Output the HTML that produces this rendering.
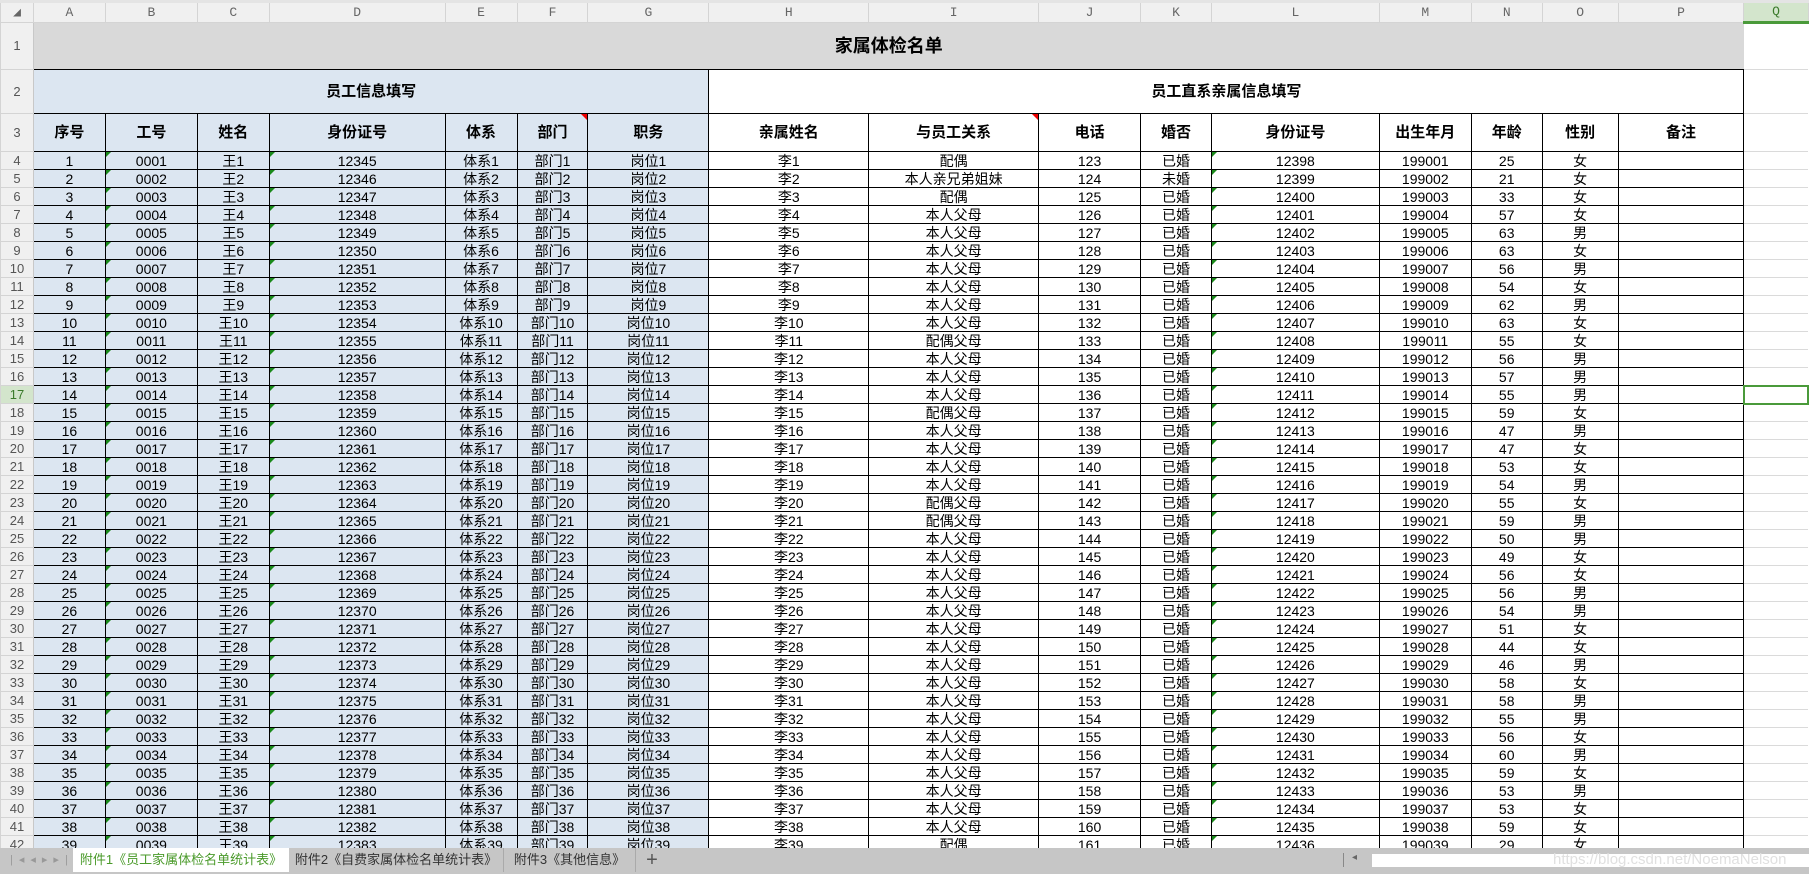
<!DOCTYPE html>
<html><head><meta charset="utf-8"><style>
*{box-sizing:border-box;margin:0;padding:0}
body{width:1809px;height:874px;overflow:hidden;background:#fff;font-family:"Liberation Sans","Noto Sans CJK SC",sans-serif;position:relative}
table{border-collapse:collapse;table-layout:fixed;position:absolute;left:0;top:0}
td{text-align:center;font-size:14px;color:#000;border:1px solid #000;overflow:hidden;white-space:nowrap;position:relative;padding:0;line-height:16px}
tr.d td{height:18px}
tr.hd td{height:21px;background:#f0f0f0;border:1px solid #d4d4d4;border-top:3px solid #e4e4e4;color:#666;font-size:13px;font-family:"Liberation Mono",monospace}
td.rn{background:#f0f0f0;border:1px solid #d4d4d4;color:#555;font-size:13px;border-right:1px solid #c8c8c8}
td.q{border:none;border-bottom:1px solid #dadada;border-left:1px solid #000}
td.b{background:#dce6f1}
tr.h3 td{font-weight:bold;font-size:15px}
td.g::before{content:"";position:absolute;left:0;top:0;border-top:5px solid #1a8a1a;border-right:5px solid transparent}
td.r::after{content:"";position:absolute;right:0;top:0;border-top:6px solid #e00;border-left:6px solid transparent}
td.sel{background:#d3e5cc;color:#3a7a2a}
.tabs{position:absolute;left:0;top:848px;width:1809px;height:26px;background:#c6c6c6;font-size:13px;color:#333}
.tab{position:absolute;top:0;height:24px;line-height:24px;text-align:center}
</style></head><body>
<table>
<colgroup><col style="width:33px"><col style="width:72px"><col style="width:92px"><col style="width:72px"><col style="width:176px"><col style="width:72px"><col style="width:71px"><col style="width:121px"><col style="width:160px"><col style="width:170px"><col style="width:102px"><col style="width:71px"><col style="width:168px"><col style="width:92px"><col style="width:71px"><col style="width:76px"><col style="width:126px"><col style="width:64px"></colgroup>
<tr class="hd"><td>◢</td><td>A</td><td>B</td><td>C</td><td>D</td><td>E</td><td>F</td><td>G</td><td>H</td><td>I</td><td>J</td><td>K</td><td>L</td><td>M</td><td>N</td><td>O</td><td>P</td><td style="background:#d3e5cc;border-bottom:3px solid #4a9a3a;color:#3a7a2a">Q</td></tr>
<tr><td class="rn" style="height:47px">1</td><td colspan="16" style="background:#d9d9d9;font-weight:bold;font-size:18px;border-top:none;border-left:none;border-right:1px solid #d9d9d9">家属体检名单</td><td class="q" style="border-left:none"></td></tr>
<tr><td class="rn" style="height:44px">2</td><td colspan="7" class="b" style="font-weight:bold;font-size:15px">员工信息填写</td><td colspan="9" style="font-weight:bold;font-size:15px">员工直系亲属信息填写</td><td class="q"></td></tr>
<tr class="h3"><td class="rn" style="height:38px;font-weight:normal;font-size:13px">3</td><td class="b">序号</td><td class="b">工号</td><td class="b">姓名</td><td class="b">身份证号</td><td class="b">体系</td><td class="b r">部门</td><td class="b">职务</td><td>亲属姓名</td><td class="r">与员工关系</td><td>电话</td><td>婚否</td><td>身份证号</td><td>出生年月</td><td>年龄</td><td>性别</td><td>备注</td><td class="q"></td></tr>
<tr class="d"><td class="rn">4</td><td class="b">1</td><td class="b g">0001</td><td class="b">王1</td><td class="b g">12345</td><td class="b">体系1</td><td class="b">部门1</td><td class="b">岗位1</td><td>李1</td><td>配偶</td><td>123</td><td>已婚</td><td class="g">12398</td><td>199001</td><td>25</td><td>女</td><td></td><td class="q"></td></tr>
<tr class="d"><td class="rn">5</td><td class="b">2</td><td class="b g">0002</td><td class="b">王2</td><td class="b g">12346</td><td class="b">体系2</td><td class="b">部门2</td><td class="b">岗位2</td><td>李2</td><td>本人亲兄弟姐妹</td><td>124</td><td>未婚</td><td class="g">12399</td><td>199002</td><td>21</td><td>女</td><td></td><td class="q"></td></tr>
<tr class="d"><td class="rn">6</td><td class="b">3</td><td class="b g">0003</td><td class="b">王3</td><td class="b g">12347</td><td class="b">体系3</td><td class="b">部门3</td><td class="b">岗位3</td><td>李3</td><td>配偶</td><td>125</td><td>已婚</td><td class="g">12400</td><td>199003</td><td>33</td><td>女</td><td></td><td class="q"></td></tr>
<tr class="d"><td class="rn">7</td><td class="b">4</td><td class="b g">0004</td><td class="b">王4</td><td class="b g">12348</td><td class="b">体系4</td><td class="b">部门4</td><td class="b">岗位4</td><td>李4</td><td>本人父母</td><td>126</td><td>已婚</td><td class="g">12401</td><td>199004</td><td>57</td><td>女</td><td></td><td class="q"></td></tr>
<tr class="d"><td class="rn">8</td><td class="b">5</td><td class="b g">0005</td><td class="b">王5</td><td class="b g">12349</td><td class="b">体系5</td><td class="b">部门5</td><td class="b">岗位5</td><td>李5</td><td>本人父母</td><td>127</td><td>已婚</td><td class="g">12402</td><td>199005</td><td>63</td><td>男</td><td></td><td class="q"></td></tr>
<tr class="d"><td class="rn">9</td><td class="b">6</td><td class="b g">0006</td><td class="b">王6</td><td class="b g">12350</td><td class="b">体系6</td><td class="b">部门6</td><td class="b">岗位6</td><td>李6</td><td>本人父母</td><td>128</td><td>已婚</td><td class="g">12403</td><td>199006</td><td>63</td><td>女</td><td></td><td class="q"></td></tr>
<tr class="d"><td class="rn">10</td><td class="b">7</td><td class="b g">0007</td><td class="b">王7</td><td class="b g">12351</td><td class="b">体系7</td><td class="b">部门7</td><td class="b">岗位7</td><td>李7</td><td>本人父母</td><td>129</td><td>已婚</td><td class="g">12404</td><td>199007</td><td>56</td><td>男</td><td></td><td class="q"></td></tr>
<tr class="d"><td class="rn">11</td><td class="b">8</td><td class="b g">0008</td><td class="b">王8</td><td class="b g">12352</td><td class="b">体系8</td><td class="b">部门8</td><td class="b">岗位8</td><td>李8</td><td>本人父母</td><td>130</td><td>已婚</td><td class="g">12405</td><td>199008</td><td>54</td><td>女</td><td></td><td class="q"></td></tr>
<tr class="d"><td class="rn">12</td><td class="b">9</td><td class="b g">0009</td><td class="b">王9</td><td class="b g">12353</td><td class="b">体系9</td><td class="b">部门9</td><td class="b">岗位9</td><td>李9</td><td>本人父母</td><td>131</td><td>已婚</td><td class="g">12406</td><td>199009</td><td>62</td><td>男</td><td></td><td class="q"></td></tr>
<tr class="d"><td class="rn">13</td><td class="b">10</td><td class="b g">0010</td><td class="b">王10</td><td class="b g">12354</td><td class="b">体系10</td><td class="b">部门10</td><td class="b">岗位10</td><td>李10</td><td>本人父母</td><td>132</td><td>已婚</td><td class="g">12407</td><td>199010</td><td>63</td><td>女</td><td></td><td class="q"></td></tr>
<tr class="d"><td class="rn">14</td><td class="b">11</td><td class="b g">0011</td><td class="b">王11</td><td class="b g">12355</td><td class="b">体系11</td><td class="b">部门11</td><td class="b">岗位11</td><td>李11</td><td>配偶父母</td><td>133</td><td>已婚</td><td class="g">12408</td><td>199011</td><td>55</td><td>女</td><td></td><td class="q"></td></tr>
<tr class="d"><td class="rn">15</td><td class="b">12</td><td class="b g">0012</td><td class="b">王12</td><td class="b g">12356</td><td class="b">体系12</td><td class="b">部门12</td><td class="b">岗位12</td><td>李12</td><td>本人父母</td><td>134</td><td>已婚</td><td class="g">12409</td><td>199012</td><td>56</td><td>男</td><td></td><td class="q"></td></tr>
<tr class="d"><td class="rn">16</td><td class="b">13</td><td class="b g">0013</td><td class="b">王13</td><td class="b g">12357</td><td class="b">体系13</td><td class="b">部门13</td><td class="b">岗位13</td><td>李13</td><td>本人父母</td><td>135</td><td>已婚</td><td class="g">12410</td><td>199013</td><td>57</td><td>男</td><td></td><td class="q"></td></tr>
<tr class="d"><td class="rn sel">17</td><td class="b">14</td><td class="b g">0014</td><td class="b">王14</td><td class="b g">12358</td><td class="b">体系14</td><td class="b">部门14</td><td class="b">岗位14</td><td>李14</td><td>本人父母</td><td>136</td><td>已婚</td><td class="g">12411</td><td>199014</td><td>55</td><td>男</td><td></td><td class="q" style="border:2px solid #4a9a3a"></td></tr>
<tr class="d"><td class="rn">18</td><td class="b">15</td><td class="b g">0015</td><td class="b">王15</td><td class="b g">12359</td><td class="b">体系15</td><td class="b">部门15</td><td class="b">岗位15</td><td>李15</td><td>配偶父母</td><td>137</td><td>已婚</td><td class="g">12412</td><td>199015</td><td>59</td><td>女</td><td></td><td class="q"></td></tr>
<tr class="d"><td class="rn">19</td><td class="b">16</td><td class="b g">0016</td><td class="b">王16</td><td class="b g">12360</td><td class="b">体系16</td><td class="b">部门16</td><td class="b">岗位16</td><td>李16</td><td>本人父母</td><td>138</td><td>已婚</td><td class="g">12413</td><td>199016</td><td>47</td><td>男</td><td></td><td class="q"></td></tr>
<tr class="d"><td class="rn">20</td><td class="b">17</td><td class="b g">0017</td><td class="b">王17</td><td class="b g">12361</td><td class="b">体系17</td><td class="b">部门17</td><td class="b">岗位17</td><td>李17</td><td>本人父母</td><td>139</td><td>已婚</td><td class="g">12414</td><td>199017</td><td>47</td><td>女</td><td></td><td class="q"></td></tr>
<tr class="d"><td class="rn">21</td><td class="b">18</td><td class="b g">0018</td><td class="b">王18</td><td class="b g">12362</td><td class="b">体系18</td><td class="b">部门18</td><td class="b">岗位18</td><td>李18</td><td>本人父母</td><td>140</td><td>已婚</td><td class="g">12415</td><td>199018</td><td>53</td><td>女</td><td></td><td class="q"></td></tr>
<tr class="d"><td class="rn">22</td><td class="b">19</td><td class="b g">0019</td><td class="b">王19</td><td class="b g">12363</td><td class="b">体系19</td><td class="b">部门19</td><td class="b">岗位19</td><td>李19</td><td>本人父母</td><td>141</td><td>已婚</td><td class="g">12416</td><td>199019</td><td>54</td><td>男</td><td></td><td class="q"></td></tr>
<tr class="d"><td class="rn">23</td><td class="b">20</td><td class="b g">0020</td><td class="b">王20</td><td class="b g">12364</td><td class="b">体系20</td><td class="b">部门20</td><td class="b">岗位20</td><td>李20</td><td>配偶父母</td><td>142</td><td>已婚</td><td class="g">12417</td><td>199020</td><td>55</td><td>女</td><td></td><td class="q"></td></tr>
<tr class="d"><td class="rn">24</td><td class="b">21</td><td class="b g">0021</td><td class="b">王21</td><td class="b g">12365</td><td class="b">体系21</td><td class="b">部门21</td><td class="b">岗位21</td><td>李21</td><td>配偶父母</td><td>143</td><td>已婚</td><td class="g">12418</td><td>199021</td><td>59</td><td>男</td><td></td><td class="q"></td></tr>
<tr class="d"><td class="rn">25</td><td class="b">22</td><td class="b g">0022</td><td class="b">王22</td><td class="b g">12366</td><td class="b">体系22</td><td class="b">部门22</td><td class="b">岗位22</td><td>李22</td><td>本人父母</td><td>144</td><td>已婚</td><td class="g">12419</td><td>199022</td><td>50</td><td>男</td><td></td><td class="q"></td></tr>
<tr class="d"><td class="rn">26</td><td class="b">23</td><td class="b g">0023</td><td class="b">王23</td><td class="b g">12367</td><td class="b">体系23</td><td class="b">部门23</td><td class="b">岗位23</td><td>李23</td><td>本人父母</td><td>145</td><td>已婚</td><td class="g">12420</td><td>199023</td><td>49</td><td>女</td><td></td><td class="q"></td></tr>
<tr class="d"><td class="rn">27</td><td class="b">24</td><td class="b g">0024</td><td class="b">王24</td><td class="b g">12368</td><td class="b">体系24</td><td class="b">部门24</td><td class="b">岗位24</td><td>李24</td><td>本人父母</td><td>146</td><td>已婚</td><td class="g">12421</td><td>199024</td><td>56</td><td>女</td><td></td><td class="q"></td></tr>
<tr class="d"><td class="rn">28</td><td class="b">25</td><td class="b g">0025</td><td class="b">王25</td><td class="b g">12369</td><td class="b">体系25</td><td class="b">部门25</td><td class="b">岗位25</td><td>李25</td><td>本人父母</td><td>147</td><td>已婚</td><td class="g">12422</td><td>199025</td><td>56</td><td>男</td><td></td><td class="q"></td></tr>
<tr class="d"><td class="rn">29</td><td class="b">26</td><td class="b g">0026</td><td class="b">王26</td><td class="b g">12370</td><td class="b">体系26</td><td class="b">部门26</td><td class="b">岗位26</td><td>李26</td><td>本人父母</td><td>148</td><td>已婚</td><td class="g">12423</td><td>199026</td><td>54</td><td>男</td><td></td><td class="q"></td></tr>
<tr class="d"><td class="rn">30</td><td class="b">27</td><td class="b g">0027</td><td class="b">王27</td><td class="b g">12371</td><td class="b">体系27</td><td class="b">部门27</td><td class="b">岗位27</td><td>李27</td><td>本人父母</td><td>149</td><td>已婚</td><td class="g">12424</td><td>199027</td><td>51</td><td>女</td><td></td><td class="q"></td></tr>
<tr class="d"><td class="rn">31</td><td class="b">28</td><td class="b g">0028</td><td class="b">王28</td><td class="b g">12372</td><td class="b">体系28</td><td class="b">部门28</td><td class="b">岗位28</td><td>李28</td><td>本人父母</td><td>150</td><td>已婚</td><td class="g">12425</td><td>199028</td><td>44</td><td>女</td><td></td><td class="q"></td></tr>
<tr class="d"><td class="rn">32</td><td class="b">29</td><td class="b g">0029</td><td class="b">王29</td><td class="b g">12373</td><td class="b">体系29</td><td class="b">部门29</td><td class="b">岗位29</td><td>李29</td><td>本人父母</td><td>151</td><td>已婚</td><td class="g">12426</td><td>199029</td><td>46</td><td>男</td><td></td><td class="q"></td></tr>
<tr class="d"><td class="rn">33</td><td class="b">30</td><td class="b g">0030</td><td class="b">王30</td><td class="b g">12374</td><td class="b">体系30</td><td class="b">部门30</td><td class="b">岗位30</td><td>李30</td><td>本人父母</td><td>152</td><td>已婚</td><td class="g">12427</td><td>199030</td><td>58</td><td>女</td><td></td><td class="q"></td></tr>
<tr class="d"><td class="rn">34</td><td class="b">31</td><td class="b g">0031</td><td class="b">王31</td><td class="b g">12375</td><td class="b">体系31</td><td class="b">部门31</td><td class="b">岗位31</td><td>李31</td><td>本人父母</td><td>153</td><td>已婚</td><td class="g">12428</td><td>199031</td><td>58</td><td>男</td><td></td><td class="q"></td></tr>
<tr class="d"><td class="rn">35</td><td class="b">32</td><td class="b g">0032</td><td class="b">王32</td><td class="b g">12376</td><td class="b">体系32</td><td class="b">部门32</td><td class="b">岗位32</td><td>李32</td><td>本人父母</td><td>154</td><td>已婚</td><td class="g">12429</td><td>199032</td><td>55</td><td>男</td><td></td><td class="q"></td></tr>
<tr class="d"><td class="rn">36</td><td class="b">33</td><td class="b g">0033</td><td class="b">王33</td><td class="b g">12377</td><td class="b">体系33</td><td class="b">部门33</td><td class="b">岗位33</td><td>李33</td><td>本人父母</td><td>155</td><td>已婚</td><td class="g">12430</td><td>199033</td><td>56</td><td>女</td><td></td><td class="q"></td></tr>
<tr class="d"><td class="rn">37</td><td class="b">34</td><td class="b g">0034</td><td class="b">王34</td><td class="b g">12378</td><td class="b">体系34</td><td class="b">部门34</td><td class="b">岗位34</td><td>李34</td><td>本人父母</td><td>156</td><td>已婚</td><td class="g">12431</td><td>199034</td><td>60</td><td>男</td><td></td><td class="q"></td></tr>
<tr class="d"><td class="rn">38</td><td class="b">35</td><td class="b g">0035</td><td class="b">王35</td><td class="b g">12379</td><td class="b">体系35</td><td class="b">部门35</td><td class="b">岗位35</td><td>李35</td><td>本人父母</td><td>157</td><td>已婚</td><td class="g">12432</td><td>199035</td><td>59</td><td>女</td><td></td><td class="q"></td></tr>
<tr class="d"><td class="rn">39</td><td class="b">36</td><td class="b g">0036</td><td class="b">王36</td><td class="b g">12380</td><td class="b">体系36</td><td class="b">部门36</td><td class="b">岗位36</td><td>李36</td><td>本人父母</td><td>158</td><td>已婚</td><td class="g">12433</td><td>199036</td><td>53</td><td>男</td><td></td><td class="q"></td></tr>
<tr class="d"><td class="rn">40</td><td class="b">37</td><td class="b g">0037</td><td class="b">王37</td><td class="b g">12381</td><td class="b">体系37</td><td class="b">部门37</td><td class="b">岗位37</td><td>李37</td><td>本人父母</td><td>159</td><td>已婚</td><td class="g">12434</td><td>199037</td><td>53</td><td>女</td><td></td><td class="q"></td></tr>
<tr class="d"><td class="rn">41</td><td class="b">38</td><td class="b g">0038</td><td class="b">王38</td><td class="b g">12382</td><td class="b">体系38</td><td class="b">部门38</td><td class="b">岗位38</td><td>李38</td><td>本人父母</td><td>160</td><td>已婚</td><td class="g">12435</td><td>199038</td><td>59</td><td>女</td><td></td><td class="q"></td></tr>
<tr class="d"><td class="rn">42</td><td class="b">39</td><td class="b g">0039</td><td class="b">王39</td><td class="b g">12383</td><td class="b">体系39</td><td class="b">部门39</td><td class="b">岗位39</td><td>李39</td><td>配偶</td><td>161</td><td>已婚</td><td class="g">12436</td><td>199039</td><td>29</td><td>女</td><td></td><td class="q"></td></tr>
</table>
<div class="tabs">
<div style="position:absolute;left:10px;top:5px;color:#999;font-size:11px;letter-spacing:6px">|◂◂▸▸|</div>
<div class="tab" style="left:73px;width:216px;background:#fff;color:#4a9a2a">附件1《员工家属体检名单统计表》</div>
<div class="tab" style="left:289px;width:215px;border-right:1px solid #aaa">附件2《自费家属体检名单统计表》</div>
<div class="tab" style="left:504px;width:132px;border-right:1px solid #aaa">附件3《其他信息》</div>
<div class="tab" style="left:642px;width:20px;font-size:20px;color:#555">+</div>
<div style="position:absolute;left:1343px;top:5px;width:1px;height:14px;background:#888"></div>
<div style="position:absolute;left:1352px;top:4px;font-size:10px;color:#666">◂</div>
<div style="position:absolute;left:1372px;top:6px;width:437px;height:13px;background:#fff"></div>
<div style="position:absolute;left:1553px;top:3px;color:#e0e0e0;font-size:15px">https://blog.csdn.net/NoemaNelson</div>
</div>
</body></html>
